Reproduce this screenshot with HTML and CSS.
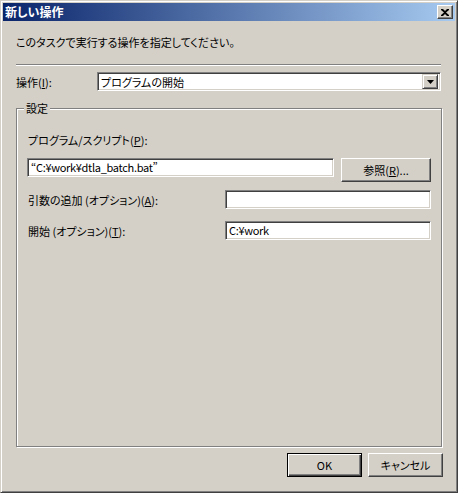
FILE: index.html
```html
<!DOCTYPE html>
<html lang="ja">
<head>
<meta charset="utf-8">
<title>新しい操作</title>
<link rel="stylesheet" href="styles.css">
</head>
<body>
<div class="window">
  <div class="titlebar">
    <span class="title">新しい操作</span>
    <span class="close">
      <svg width="8" height="7" viewBox="0 0 8 7"><path d="M0 0h2l2 2 2-2h2v1L5 3.5 8 6v1H6L4 5 2 7H0V6l3-2.5L0 1z" fill="#000"/></svg>
    </span>
  </div>
  <div class="content">
    <div class="desc">このタスクで実行する操作を指定してください。</div>
    <div class="sep"></div>
    <div class="action-row">
      <span class="label">操作(<u>I</u>):</span>
      <div class="combo">
        <span class="combo-text">プログラムの開始</span>
        <span class="combo-btn">
          <svg width="7" height="4" viewBox="0 0 7 4"><path d="M0 0h7L3.5 4z" fill="#000"/></svg>
        </span>
      </div>
    </div>
    <div class="group">
      <span class="legend">設定</span>
      <div class="glabel">プログラム/スクリプト(<u>P</u>):</div>
      <div class="prog-row">
        <div class="input prog"><span class="latin">“C:¥work¥dtla_batch.bat”</span></div>
        <div class="btn browse">参照(<u>R</u>)...</div>
      </div>
      <div class="opt-row args">
        <span class="label">引数の追加 (オプション)(<u>A</u>):</span>
        <div class="input opt"></div>
      </div>
      <div class="opt-row start">
        <span class="label">開始 (オプション)(<u>T</u>):</span>
        <div class="input opt"><span class="latin">C:¥work</span></div>
      </div>
    </div>
    <div class="buttons">
      <div class="btn default">OK</div>
      <div class="btn">キャンセル</div>
    </div>
  </div>
</div>
</body>
</html>
```
FILE: styles.css
```css
* { box-sizing: border-box; }
html, body { margin: 0; padding: 0; background: #D4D0C8; }
body {
  font-family: "Noto Sans CJK JP", "Noto Sans", sans-serif;
  font-size: 11px;
  color: #000;
  font-feature-settings: "palt";
}
.window {
  width: 458px;
  height: 493px;
  background: #D4D0C8;
  border: 1px solid;
  border-color: #D4D0C8 #404040 #404040 #D4D0C8;
  box-shadow: inset 1px 1px #fff, inset -1px -1px #808080;
  padding: 2px;
}
.titlebar {
  height: 18px;
  background: linear-gradient(to right, #0A246A, #A6CAF0);
  display: flex;
  align-items: center;
  padding-left: 2px;
  padding-right: 2px;
}
.title {
  color: #fff;
  font-weight: bold;
  font-size: 12px;
  line-height: 14px;
  flex: 1;
}
.close {
  width: 16px;
  height: 14px;
  background: #D4D0C8;
  border: 1px solid;
  border-color: #fff #404040 #404040 #fff;
  box-shadow: inset -1px -1px #808080;
  display: flex;
  align-items: center;
  justify-content: center;
}
.content {
  padding: 0 14px 0 13px;
}
.desc {
  margin-top: 14px;
  line-height: 14px;
}
.sep {
  margin-top: 15px;
  border-top: 1px solid #808080;
  border-bottom: 1px solid #fff;
}
.action-row {
  margin-top: 6px;
  display: flex;
  align-items: center;
}
.label { line-height: 14px; }
.action-row .label { width: 81px; }
.combo {
  flex: 1;
  height: 19px;
  background: #fff;
  border: 1px solid;
  border-color: #808080 #fff #fff #808080;
  box-shadow: inset 1px 1px #404040, inset -1px -1px #D4D0C8;
  display: flex;
  align-items: center;
  padding: 2px 2px 2px 3px;
}
.combo-text { flex: 1; line-height: 14px; }
.combo-btn {
  width: 16px;
  height: 15px;
  background: #D4D0C8;
  border: 1px solid;
  border-color: #D4D0C8 #404040 #404040 #D4D0C8;
  box-shadow: inset 1px 1px #fff, inset -1px -1px #808080;
  display: flex;
  align-items: center;
  justify-content: center;
}
.group {
  position: relative;
  margin-top: 17px;
  height: 339px;
  width: 426px;
  border: 1px solid #808080;
  box-shadow: inset 1px 1px #fff, 1px 1px #fff;
  padding: 24px 10px 0 10px;
}
.legend {
  position: absolute;
  left: 7px;
  top: -8px;
  padding: 0 2px;
  background: #D4D0C8;
  line-height: 14px;
}
.glabel {
  line-height: 14px;
  padding-left: 1px;
}
.prog-row {
  margin-top: 11px;
  display: flex;
  align-items: flex-start;
}
.input {
  height: 19px;
  background: #fff;
  border: 1px solid;
  border-color: #808080 #fff #fff #808080;
  box-shadow: inset 1px 1px #404040, inset -1px -1px #D4D0C8;
  padding: 0 3px;
  line-height: 17px;
  white-space: nowrap;
}
.latin { letter-spacing: -0.3px; }
.prog { width: 307px; }
.btn {
  width: 75px;
  height: 24px;
  background: #D4D0C8;
  border: 1px solid;
  border-color: #fff #404040 #404040 #fff;
  box-shadow: inset -1px -1px #808080, inset 1px 1px #D4D0C8;
  display: flex;
  align-items: center;
  justify-content: center;
  line-height: 14px;
}
.browse { width: 90px; margin-left: auto; }
.opt-row {
  display: flex;
  align-items: center;
}
.opt-row .label { flex: 1; padding-left: 1px; }
.opt { width: 206px; }
.args { margin-top: 8px; }
.start { margin-top: 12px; }
.buttons {
  margin-top: 6px;
  margin-right: -2px;
  display: flex;
  justify-content: flex-end;
  gap: 6px;
}
.btn.default {
  border: 1px solid #000;
  box-shadow: inset 1px 1px #fff, inset -1px -1px #404040, inset -2px -2px #808080;
}
```
